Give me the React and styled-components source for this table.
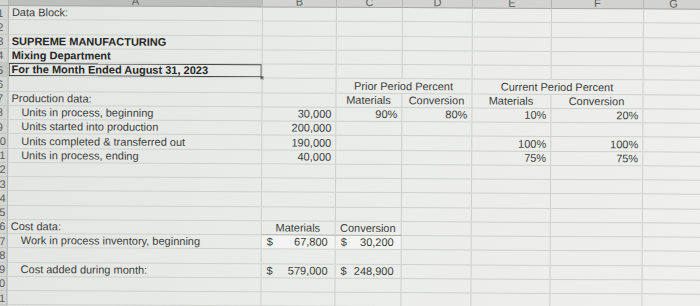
import React from "react";
import styled, { createGlobalStyle } from "styled-components";

const GlobalStyle = createGlobalStyle`
  body {
    margin: 0;
    overflow: hidden;
    background: linear-gradient(100deg, #e3e5e2 0%, #eaece9 45%, #efefed 100%);
    font-family: "Liberation Sans", Arial, sans-serif;
  }
`;

const Viewport = styled("div")`
  height: 100vh;
  overflow: hidden;
`;

// the photo is taken a little askew, so the sheet is tilted slightly
const Sheet = styled("div")`
  display: grid;
  grid-template-columns: 16px 254px 74px 66px 70px 79px 92px 60px;
  grid-template-rows: 14px;
  grid-auto-rows: 14.25px;
  width: 711px;
  margin: -8px 0 0 -7px;
  font-size: 11px;
  color: #3d3e3d;
  transform: rotate(0.3deg);
  transform-origin: 7px 8px;
`;

const ColHead = styled("div")`
  display: flex;
  align-items: flex-end;
  justify-content: center;
  overflow: hidden;
  line-height: 9px;
  color: #5d5e5c;
  background: ${(p) => (p.$active ? "#bdbfbc" : "#d2d3d0")};
  border-right: 1px solid #b4b6b3;
  border-bottom: 1px solid #a8aaa7;
  box-sizing: border-box;
`;

const RowHead = styled("div")`
  display: flex;
  align-items: center;
  justify-content: center;
  overflow: hidden;
  color: #5a5b59;
  background: ${(p) => (p.$active ? "#c5c7c4" : "#d4d6d3")};
  border-right: 1px solid #b0b2af;
  border-bottom: 1px solid #c4c6c3;
  box-sizing: border-box;
`;

const Cell = styled("div")`
  grid-column: span ${(p) => p.$span || 1};
  position: relative;
  display: flex;
  align-items: flex-end;
  justify-content: ${(p) =>
    p.$align === "right" ? "flex-end" : p.$align === "center" ? "center" : p.$acct ? "space-between" : "flex-start"};
  padding: 0 ${(p) => (p.$acct ? "7px 1px 5px" : "4px 1px 3px")};
  padding-left: ${(p) => (p.$indent ? "13px" : p.$acct ? "5px" : "3px")};
  white-space: nowrap;
  font-weight: ${(p) => (p.$bold ? 700 : 400)};
  color: ${(p) => (p.$bold ? "#262726" : "inherit")};
  background: ${(p) => (p.$fill ? "rgba(255,255,255,0.45)" : "transparent")};
  border-right: 1px solid #cdd0cc;
  border-bottom: 1px solid ${(p) => (p.$underline ? "#a9aba8" : "#cfd1cd")};
  box-sizing: border-box;
  box-shadow: ${(p) => (p.$selected ? "inset 0 0 0 1px #474846" : "none")};

  ${(p) =>
    p.$selected &&
    `
    &::after {
      content: "";
      position: absolute;
      right: -2px;
      bottom: -2px;
      width: 3px;
      height: 3px;
      background: #474846;
    }
  `}
`;

const cols = ["A", "B", "C", "D", "E", "F", "G"];

const data = {
  1: { A: { text: "Data Block:" } },
  3: { A: { text: "SUPREME MANUFACTURING", bold: true } },
  4: { A: { text: "Mixing Department", bold: true } },
  5: { A: { text: "For the Month Ended August 31, 2023", bold: true, selected: true } },
  6: {
    C: { text: "Prior Period Percent", span: 2, align: "center" },
    E: { text: "Current Period Percent", span: 2, align: "center" },
  },
  7: {
    A: { text: "Production data:" },
    C: { text: "Materials", align: "center" },
    D: { text: "Conversion", align: "center" },
    E: { text: "Materials", align: "center" },
    F: { text: "Conversion", align: "center" },
  },
  8: {
    A: { text: "Units in process, beginning", indent: true },
    B: { text: "30,000", align: "right" },
    C: { text: "90%", align: "right" },
    D: { text: "80%", align: "right" },
    E: { text: "10%", align: "right" },
    F: { text: "20%", align: "right" },
  },
  9: {
    A: { text: "Units started into production", indent: true },
    B: { text: "200,000", align: "right" },
  },
  10: {
    A: { text: "Units completed & transferred out", indent: true },
    B: { text: "190,000", align: "right" },
    E: { text: "100%", align: "right" },
    F: { text: "100%", align: "right" },
  },
  11: {
    A: { text: "Units in process, ending", indent: true },
    B: { text: "40,000", align: "right" },
    E: { text: "75%", align: "right" },
    F: { text: "75%", align: "right" },
  },
  16: {
    A: { text: "Cost data:" },
    B: { text: "Materials", align: "center", underline: true },
    C: { text: "Conversion", align: "center", underline: true },
  },
  17: {
    A: { text: "Work in process inventory, beginning", indent: true },
    B: { acct: "67,800", fill: true },
    C: { acct: "30,200", fill: true },
  },
  19: {
    A: { text: "Cost added during month:", indent: true },
    B: { acct: "579,000" },
    C: { acct: "248,900" },
  },
};

const renderRow = (r) => {
  const row = data[r] || {};
  const cells = [];
  for (let i = 0; i < cols.length; ) {
    const def = row[cols[i]] || {};
    const span = def.span || 1;
    cells.push(
      <Cell
        key={`${r}-${cols[i]}`}
        $span={span}
        $align={def.align}
        $bold={def.bold}
        $indent={def.indent}
        $acct={!!def.acct}
        $fill={def.fill}
        $underline={def.underline}
        $selected={def.selected}
      >
        {def.acct ? (
          <>
            <span>$</span>
            <span>{def.acct}</span>
          </>
        ) : (
          def.text
        )}
      </Cell>
    );
    i += span;
  }
  return (
    <React.Fragment key={r}>
      <RowHead $active={r === 5}>{r}</RowHead>
      {cells}
    </React.Fragment>
  );
};

const App = () => {
  const rows = Array.from({ length: 22 }, (_, i) => i + 1);
  return (
    <Viewport>
      <GlobalStyle />
      <Sheet>
        <ColHead />
        {cols.map((c) => (
          <ColHead key={c} $active={c === "A"}>
            {c}
          </ColHead>
        ))}
        {rows.map(renderRow)}
      </Sheet>
    </Viewport>
  );
};

export default App;
